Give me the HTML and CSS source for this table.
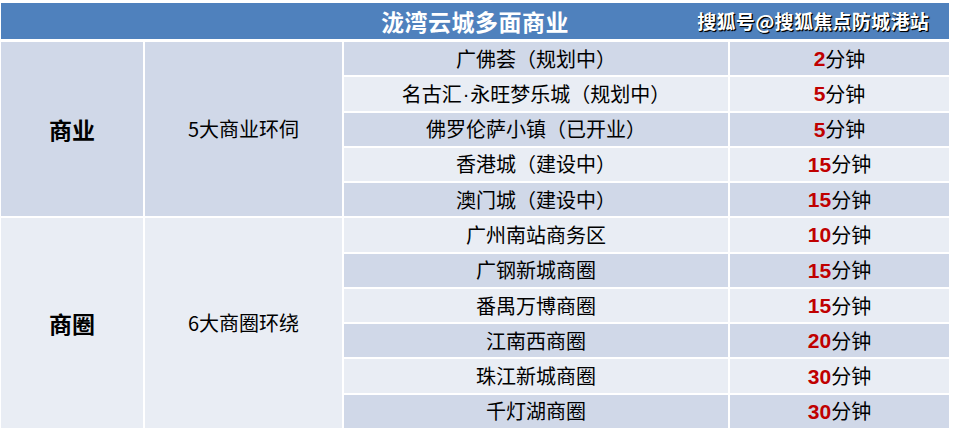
FILE: index.html
```html
<!DOCTYPE html>
<html lang="zh">
<head>
<meta charset="utf-8">
<link rel="stylesheet" href="styles.css">
</head>
<body>
<div class="sheet">
  <div class="head">
    <span class="title">泷湾云城多面商业</span>
    <span class="mark">搜狐号@搜狐焦点防城港站</span>
  </div>
  <div class="grid">
    <div class="cat dark g1">商业</div>
    <div class="sub dark g1">5大商业环伺</div>
    <div class="name dark">广佛荟（规划中）</div><div class="time dark"><b>2</b>分钟</div>
    <div class="name light">名古汇<span class="dot">·</span>永旺梦乐城（规划中）</div><div class="time light"><b>5</b>分钟</div>
    <div class="name dark">佛罗伦萨小镇（已开业）</div><div class="time dark"><b>5</b>分钟</div>
    <div class="name light">香港城（建设中）</div><div class="time light"><b>15</b>分钟</div>
    <div class="name dark">澳门城（建设中）</div><div class="time dark"><b>15</b>分钟</div>
    <div class="cat light g2">商圈</div>
    <div class="sub light g2">6大商圈环绕</div>
    <div class="name light">广州南站商务区</div><div class="time light"><b>10</b>分钟</div>
    <div class="name dark">广钢新城商圈</div><div class="time dark"><b>15</b>分钟</div>
    <div class="name light">番禺万博商圈</div><div class="time light"><b>15</b>分钟</div>
    <div class="name dark">江南西商圈</div><div class="time dark"><b>20</b>分钟</div>
    <div class="name light">珠江新城商圈</div><div class="time light"><b>30</b>分钟</div>
    <div class="name dark">千灯湖商圈</div><div class="time dark"><b>30</b>分钟</div>
  </div>
</div>
</body>
</html>
```
FILE: styles.css
```css
html, body {
  margin: 0;
  padding: 0;
  background: #ffffff;
}
body {
  font-family: "Noto Sans CJK SC", "Noto Sans", sans-serif;
  color: #000;
}
.sheet {
  width: 948px;
  padding: 3px 0 0 1px;
}
.head {
  position: relative;
  height: 36px;
  background: #4f81bd;
  display: flex;
  align-items: center;
  justify-content: center;
}
.title {
  color: #fff;
  font-size: 23px;
  font-weight: 700;
  letter-spacing: 0.5px;
  line-height: 1;
}
.mark {
  position: absolute;
  right: 20px;
  top: 8px;
  color: #fff;
  font-size: 19px;
  font-weight: 700;
  letter-spacing: 0.3px;
  line-height: 1;
  text-shadow: 1px 1px 1px #000, 1px 1px 0 #000;
}
.grid {
  margin-top: 3px;
  height: 386px;
  display: grid;
  grid-template-columns: 142px 197px 384px 1fr;
  grid-template-rows: repeat(11, 1fr);
  gap: 2px 2px;
}
.dark { background: #d0d8e8; }
.light { background: #e9edf4; }
.grid > div {
  display: flex;
  align-items: center;
  justify-content: center;
  font-size: 20px;
  line-height: 1;
}
.dot {
  font-family: "Liberation Sans", Arial, sans-serif;
  padding: 0 1px;
}
.g1 { grid-row: 1 / span 5; }
.g2 { grid-row: 6 / span 6; }
.cat { grid-column: 1; font-weight: 700; font-size: 23px !important; }
.sub { grid-column: 2; }
.name { grid-column: 3; }
.time { grid-column: 4; }
.time b {
  font-family: "Liberation Sans", Arial, sans-serif;
  color: #c00000;
  font-weight: 700;
  font-size: 21px;
}
```
